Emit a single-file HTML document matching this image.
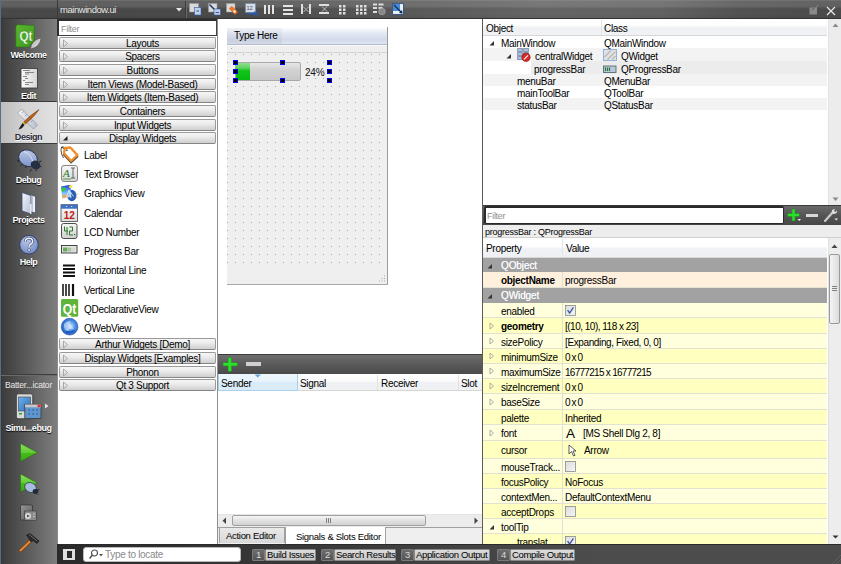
<!DOCTYPE html><html><head><meta charset="utf-8"><style>
*{margin:0;padding:0;box-sizing:border-box}
html,body{width:841px;height:564px;overflow:hidden;background:#fff;font-family:"Liberation Sans",sans-serif;font-size:10px;color:#000}
.ab{position:absolute}
.t{position:absolute;white-space:nowrap;line-height:10px;letter-spacing:-0.3px}
.b{font-weight:bold}
svg{position:absolute;overflow:visible}
</style></head><body>

<div class="ab" style="left:0px;top:0px;width:841px;height:19px;background:linear-gradient(rgba(255,255,255,.2) 0,rgba(255,255,255,.2) 1px,rgba(255,255,255,.13) 1px,rgba(255,255,255,.13) 6px,rgba(255,255,255,0) 9px,rgba(0,0,0,0) 14px,rgba(0,0,0,.05) 18px),linear-gradient(90deg,#484848 0,#4a4a4a 230px,#585858 400px,#646464 540px,#626262 660px,#525252 740px,#4a4a4a 841px);border-bottom:1px solid #333"></div>
<div class="ab" style="left:0px;top:19px;width:57px;height:545px;background:linear-gradient(90deg,#3a3a3a,#5c5c5c 50%,#7e7e7e 100%)"></div>
<div class="ab" style="left:0px;top:0px;width:1px;height:564px;background:#5d6d7d"></div>
<div class="ab" style="left:1px;top:19px;width:1px;height:545px;background:#383838"></div>
<div class="ab" style="left:57px;top:19px;width:1px;height:525px;background:#8c8c8c"></div>
<div class="ab" style="left:57px;top:0px;width:1px;height:19px;background:#3a3a3a"></div>
<div class="ab" style="left:1px;top:101px;width:56px;height:1px;background:#3a3a3a"></div>
<div class="ab" style="left:1px;top:102px;width:56px;height:41px;background:linear-gradient(90deg,#bdbdbd,#d2d2d2 40%,#e2e2e2)"></div>
<div class="ab" style="left:1px;top:143px;width:56px;height:1px;background:#3a3a3a"></div>
<svg style="left:14px;top:24px" width="30" height="26" viewBox="0 0 30 26"><defs><linearGradient id="qg" x1="0" y1="0" x2="1" y2="1"><stop offset="0" stop-color="#5cb52e"/><stop offset="1" stop-color="#3b9a1c"/></linearGradient></defs><path d="M4 0.7 L20.4 1.5 L20.4 16 L14.5 23 L2.5 23 Q1.8 23 1.8 22 L1.8 3 Q1.8 0.7 4 0.7 Z" fill="url(#qg)" stroke="#2a7210" stroke-width="0.6"/><text x="5.5" y="16.6" font-family="Liberation Sans" font-weight="bold" font-size="15" textLength="13" lengthAdjust="spacingAndGlyphs" fill="#fff" stroke="#2a7a10" stroke-width="0.3">Qt</text><path d="M17 24.5 Q17.5 17 26.5 14.5 Q25.5 23 17 24.5 Z" fill="#cfcfcf"/><path d="M18 23.5 Q21 19 25 16" stroke="#a8a8a8" stroke-width="0.5" fill="none"/></svg>
<div class="t b" style="left:0px;width:57px;text-align:center;top:50px;color:#fff;text-shadow:0 1px 1px #000;font-size:9px;letter-spacing:-0.45px">Welcome</div>
<svg style="left:20px;top:67px" width="19" height="23" viewBox="0 0 19 23"><defs><linearGradient id="eg" x1="0" y1="0" x2="1" y2="0"><stop offset="0" stop-color="#fafafa"/><stop offset="1" stop-color="#d6d6d6"/></linearGradient></defs><rect x="1" y="1.5" width="16.5" height="19.5" fill="url(#eg)" stroke="#333" stroke-width="0.8"/><path d="M3 3.5h7M5 5.5h9M5 7h4M3 9.5h4M5 11.5h3M3 13.5h2M5 15.5h8M5 17.5h4" stroke="#7a7a7a" stroke-width="0.9"/></svg>
<div class="t b" style="left:0px;width:57px;text-align:center;top:91px;color:#fff;text-shadow:0 1px 1px #000;font-size:9px;letter-spacing:-0.45px">Edit</div>
<svg style="left:16px;top:108px" width="25" height="23" viewBox="0 0 25 23"><defs><linearGradient id="rg" x1="0" y1="0" x2="1" y2="0"><stop offset="0" stop-color="#f2f4f8"/><stop offset="1" stop-color="#b9c0cc"/></linearGradient></defs><path d="M1.5 5 L5.5 1 L21.5 17 L17.5 21 Z" fill="url(#rg)" stroke="#8d95a2" stroke-width="0.7"/><path d="M6 5l1.5-1.5M9 8l1.5-1.5M12 11l1.5-1.5M15 14l1.5-1.5" stroke="#888" stroke-width="0.7"/><path d="M23 1.5 Q19 8 9.5 16 L7.5 14 Q16 6 23 1.5 Z" fill="#b5601a" stroke="#6a3a10" stroke-width="0.5"/><path d="M7.5 14 L9.5 16 L8.5 17 L6.5 15 Z" fill="#e0b020"/><path d="M6.5 15 L8.5 17 Q6 21 2.5 21.5 Q4.5 18 6.5 15 Z" fill="#1e1e1e"/></svg>
<div class="t b" style="left:0px;width:57px;text-align:center;top:132px;color:#2a2a38;text-shadow:0 1px 0 #fff;font-size:9px;letter-spacing:-0.45px">Design</div>
<svg style="left:16px;top:149px" width="26" height="22" viewBox="0 0 26 22"><defs><linearGradient id="bg1" x1="0" y1="0" x2="0.6" y2="1"><stop offset="0" stop-color="#c6d2ee"/><stop offset="1" stop-color="#7f95c8"/></linearGradient></defs><ellipse cx="12" cy="9.3" rx="9.8" ry="8" fill="url(#bg1)" stroke="#1e2840" stroke-width="0.8" transform="rotate(28 12 9.3)"/><path d="M8 2.5 Q15 5 17.5 14" stroke="#eef2fa" stroke-width="0.7" fill="none"/><ellipse cx="19.5" cy="16" rx="5" ry="4.2" fill="#273042" transform="rotate(30 19.5 16)"/><path d="M15.5 20 l-1.5 2.5 M20 20.5 l0.5 1.5 M23 13 l2.5 -1 M24 17 l1.5 1 M3 11.5 l-2 0.7 M6 15.5 l-1.5 1.5 M10 17.5 l-0.5 1.5" stroke="#1a1a1a" stroke-width="0.9"/></svg>
<div class="t b" style="left:0px;width:57px;text-align:center;top:175px;color:#fff;text-shadow:0 1px 1px #000;font-size:9px;letter-spacing:-0.45px">Debug</div>
<svg style="left:20px;top:191px" width="18" height="25" viewBox="0 0 18 25"><defs><linearGradient id="pg" x1="0" y1="0" x2="1" y2="1"><stop offset="0" stop-color="#f4f6fb"/><stop offset="1" stop-color="#b4bfd6"/></linearGradient></defs><path d="M10 3.5 L15.5 5.5 L15.5 22 L10 20.5 Z" fill="#eef1f6" stroke="#3a4a6a" stroke-width="0.7"/><path d="M12.5 5 L12.5 21" stroke="#9aa6bc" stroke-width="0.6"/><path d="M2 1.5 L11 4.5 L11 23 L2 20 Z" fill="url(#pg)" stroke="#3a4a6a" stroke-width="0.8"/><path d="M10.8 13 L10.8 23" stroke="#fff" stroke-width="1.2"/></svg>
<div class="t b" style="left:0px;width:57px;text-align:center;top:215px;color:#fff;text-shadow:0 1px 1px #000;font-size:9px;letter-spacing:-0.45px">Projects</div>
<svg style="left:18px;top:234px" width="22" height="22" viewBox="0 0 22 22"><defs><radialGradient id="hg" cx="0.4" cy="0.3" r="0.8"><stop offset="0" stop-color="#b7c6ea"/><stop offset="1" stop-color="#6d85c0"/></radialGradient></defs><circle cx="11" cy="10.7" r="9.3" fill="url(#hg)" stroke="#2c3a66" stroke-width="0.9"/><path d="M7.3 7.8 Q7.3 4.3 11 4.3 Q14.6 4.3 14.6 7.4 Q14.6 9.2 12.2 10.5 Q11 11.2 11 13" stroke="#2c3a66" stroke-width="2.6" fill="none"/><path d="M7.3 7.8 Q7.3 4.3 11 4.3 Q14.6 4.3 14.6 7.4 Q14.6 9.2 12.2 10.5 Q11 11.2 11 13" stroke="#f4f6fb" stroke-width="1.5" fill="none"/><circle cx="11" cy="16" r="1.4" fill="#f4f6fb" stroke="#2c3a66" stroke-width="0.6"/></svg>
<div class="t b" style="left:0px;width:57px;text-align:center;top:257px;color:#fff;text-shadow:0 1px 1px #000;font-size:9px;letter-spacing:-0.45px">Help</div>
<div class="ab" style="left:1px;top:374px;width:56px;height:1px;background:#3d3d3d"></div>
<div class="ab" style="left:1px;top:375px;width:56px;height:1px;background:#6a6a6a"></div>
<div class="t " style="left:0px;width:57px;text-align:center;top:380px;color:#e8e8e8;font-size:8.5px;letter-spacing:-0.2px">Batter...icator</div>
<svg style="left:14px;top:392px" width="38" height="28" viewBox="0 0 38 28"><defs><linearGradient id="ph" x1="0" y1="0" x2="1" y2="1"><stop offset="0" stop-color="#6fb0ea"/><stop offset="1" stop-color="#2d6fb8"/></linearGradient></defs><rect x="2.3" y="1.8" width="16.5" height="25" rx="2" fill="#d8d8d8" stroke="#3a3a3a" stroke-width="0.9"/><rect x="4.5" y="5" width="12" height="14" fill="url(#ph)" stroke="#333" stroke-width="0.5"/><rect x="5" y="21" width="3" height="1.5" fill="#2a2"/><rect x="10.8" y="12.3" width="16.2" height="14.2" fill="#5f95cf" stroke="#3a3a3a" stroke-width="0.8"/><rect x="11" y="12.5" width="16" height="2.8" fill="#c8c8c8"/><rect x="23.5" y="12.5" width="3.2" height="2.6" fill="#e03030"/><path d="M14.5 18h1.2M18.5 18h1.2M22.5 18h1.2M14.5 22h1.2M18.5 22h1.2M22.5 22h1.2" stroke="#1c3a66" stroke-width="1.2"/><path d="M31 11.5 L34.5 14 L31 16.5 Z" fill="#e8e8e8"/></svg>
<div class="t b" style="left:0px;width:57px;text-align:center;top:423px;color:#fff;text-shadow:0 1px 1px #000;font-size:9px;letter-spacing:-0.45px">Simu...ebug</div>
<svg style="left:20px;top:442px" width="20" height="22" viewBox="0 0 20 22"><defs><linearGradient id="rn" x1="0" y1="0" x2="0" y2="1"><stop offset="0" stop-color="#8ee060"/><stop offset="0.5" stop-color="#62cc34"/><stop offset="0.52" stop-color="#46bb1a"/><stop offset="1" stop-color="#3aa812"/></linearGradient></defs><path d="M0.5 1.5 L17.5 10.5 L0.5 19.5 Z" fill="url(#rn)" stroke="#2a6a12" stroke-width="0.6"/></svg>
<svg style="left:20px;top:473px" width="22" height="23" viewBox="0 0 22 23"><path d="M0.5 1 L17.5 10 L0.5 19 Z" fill="url(#rn)" stroke="#2a6a12" stroke-width="0.6"/><ellipse cx="10.5" cy="14.5" rx="6" ry="4.8" fill="#a9bbdf" stroke="#2a3550" stroke-width="0.7" transform="rotate(25 10.5 14.5)"/><ellipse cx="15.5" cy="18.5" rx="2.8" ry="2.4" fill="#222a36"/><path d="M18 17 l1.5 -0.5 M17.5 21 l1 1" stroke="#111" stroke-width="0.7"/></svg>
<svg style="left:19px;top:504px" width="20" height="19" viewBox="0 0 20 19"><defs><linearGradient id="bd" x1="0" y1="0" x2="1" y2="1"><stop offset="0" stop-color="#9a9a9a"/><stop offset="1" stop-color="#555"/></linearGradient></defs><rect x="1.5" y="1" width="12" height="15" rx="1" fill="url(#bd)" stroke="#2e2e2e" stroke-width="0.7"/><rect x="5.5" y="7" width="12" height="9.5" fill="#8a8a8a" stroke="#3a3a3a" stroke-width="0.6"/><circle cx="9" cy="12" r="3" fill="#ddd"/><path d="M8 10.5 L11 12 L8 13.5 Z" fill="#555"/><path d="M14 10h2M14 12.5h2" stroke="#ccc" stroke-width="0.8"/></svg>
<svg style="left:18px;top:532px" width="23" height="21" viewBox="0 0 23 21"><path d="M2.5 18.5 L14.5 7" stroke="#7a3a10" stroke-width="3.2" stroke-linecap="round"/><path d="M2.5 18.5 L14.5 7" stroke="#e08a3a" stroke-width="2" stroke-linecap="round"/><path d="M8.5 3 L12 1.5 L21 9 L19 11.5 L15 8.5 L13 10 Z" fill="#2a2a2a" stroke="#111" stroke-width="0.5"/><path d="M11 2.5 L19 9" stroke="#888" stroke-width="0.7"/></svg>
<div class="t " style="left:60px;top:5px;color:#e6e6e6;font-size:9.5px;letter-spacing:-0.45px">mainwindow.ui</div>
<svg style="left:176px;top:8px" width="6" height="4" viewBox="0 0 6 4"><path d="M0 0 L6 0 L3 3.5 Z" fill="#e8e8e8"/></svg>
<div class="ab" style="left:185px;top:1px;width:1px;height:17px;background:#3a3a3a"></div>
<div class="ab" style="left:186px;top:1px;width:1px;height:17px;background:#6a6a6a"></div>
<svg style="left:189px;top:3px" width="14" height="13" viewBox="0 0 14 13"><rect x="0.5" y="0.5" width="9" height="8.5" fill="#d9d9d9" stroke="#999" stroke-width="0.5"/><rect x="5.5" y="4.5" width="6.5" height="7.5" fill="#b9d2f2" stroke="#3a5a9a" stroke-width="0.6"/><rect x="7.5" y="7.5" width="2.5" height="1" fill="#444"/></svg>
<svg style="left:208px;top:3px" width="14" height="13" viewBox="0 0 14 13"><rect x="0.5" y="0.5" width="8.5" height="8.5" fill="#d9d9d9" stroke="#999" stroke-width="0.5"/><path d="M1.5 1.5 L8 8" stroke="#1a3a70" stroke-width="1.5"/><path d="M9 9 L5.5 8.5 L8.5 5.5 Z" fill="#1a3a70"/><rect x="6" y="6" width="6.5" height="6" fill="#b9d2f2" stroke="#3a5a9a" stroke-width="0.6"/><path d="M7.5 9.5h3.5" stroke="#335" stroke-width="0.8"/></svg>
<svg style="left:226px;top:3px" width="13" height="13" viewBox="0 0 13 13"><rect x="0.5" y="0.5" width="8.5" height="8.5" fill="#d9d9d9" stroke="#999" stroke-width="0.5"/><path d="M3.5 5.5 L6 3.5 L11.5 9 L9 11.5 Z" fill="#f07a2a" stroke="#e05a10" stroke-width="0.8"/><circle cx="8.5" cy="8.5" r="1.2" fill="#fff"/></svg>
<svg style="left:245px;top:3px" width="13" height="13" viewBox="0 0 13 13"><rect x="0.5" y="0.5" width="10" height="9" fill="#dcdcdc" stroke="#6a8ac0" stroke-width="0.6"/><text x="1.5" y="7" font-family="Liberation Sans" font-size="5.5" fill="#2a4a9a">12</text><path d="M1.5 10.5h8" stroke="#2a5ab0" stroke-width="1.6"/><path d="M9 8 L12 10.5 L9 13 Z" fill="#2a5ab0"/><path d="M12.5 8v5" stroke="#2a5ab0" stroke-width="1"/></svg>
<svg style="left:264px;top:5px" width="11" height="10" viewBox="0 0 11 10"><path d="M1 0v9M5 0v9M9 0v9" stroke="#e4e4e4" stroke-width="2"/></svg>
<svg style="left:283px;top:5px" width="10" height="10" viewBox="0 0 10 10"><path d="M0 1h10M0 5h10M0 9h10" stroke="#e4e4e4" stroke-width="2"/></svg>
<svg style="left:301px;top:4px" width="10" height="11" viewBox="0 0 10 11"><path d="M1 0v10M9 0v10" stroke="#dedede" stroke-width="2"/><path d="M2.5 3 L5 5.5 L7.5 3 M2.5 8 L5 5.5 L7.5 8" stroke="#bcbcbc" stroke-width="1" fill="none"/></svg>
<svg style="left:319px;top:4px" width="11" height="11" viewBox="0 0 11 11"><path d="M0 1h10M0 9h10" stroke="#dedede" stroke-width="2"/><path d="M3 2.5 L5.5 5 L3 7.5 M8 2.5 L5.5 5 L8 7.5" stroke="#bcbcbc" stroke-width="1" fill="none"/></svg>
<svg style="left:339px;top:5px" width="7" height="10" viewBox="0 0 7 10"><path d="M0 0h2.5v2.5h-2.5zM4 0h2.5v2.5h-2.5zM0 3.5h2.5v2.5h-2.5zM4 3.5h2.5v2.5h-2.5zM0 7h2.5v2.5h-2.5zM4 7h2.5v2.5h-2.5z" fill="#e0e0e0"/></svg>
<svg style="left:356px;top:5px" width="11" height="10" viewBox="0 0 11 10"><path d="M0 0h2.5v2.5h-2.5zM4 0h2.5v2.5h-2.5zM8 0h2.5v2.5h-2.5zM0 3.5h2.5v2.5h-2.5zM4 3.5h2.5v2.5h-2.5zM8 3.5h2.5v2.5h-2.5zM0 7h2.5v2.5h-2.5zM4 7h2.5v2.5h-2.5zM8 7h2.5v2.5h-2.5z" fill="#e0e0e0"/></svg>
<svg style="left:373px;top:3px" width="13" height="12" viewBox="0 0 13 12"><path d="M0 1.5h4M5.5 1.5h5M0 5h4M5.5 5h4M0 9h4" stroke="#dcdcdc" stroke-width="1.8"/><circle cx="9" cy="8.5" r="3.3" fill="#888" stroke="#aaa" stroke-width="0.6"/></svg>
<svg style="left:392px;top:3px" width="12" height="12" viewBox="0 0 12 12"><rect x="0.5" y="0.5" width="11" height="11" fill="#4a8ad0" stroke="#2a4a80" stroke-width="0.6"/><rect x="1" y="8" width="9" height="3" fill="#e8eef6"/><rect x="8" y="1" width="3" height="10" fill="#e8eef6"/><path d="M2 2 L10 10" stroke="#10305a" stroke-width="1.2"/><path d="M10.5 10.5 L7 10 L10 7 Z" fill="#10305a"/></svg>
<svg style="left:809px;top:4px" width="10" height="11" viewBox="0 0 10 11"><rect x="0.5" y="3.5" width="7.5" height="7" fill="#8a8a8a"/><path d="M4 8 L9 1" stroke="#8a8a8a" stroke-width="1"/><path d="M3 6 L5 4" stroke="#555" stroke-width="1"/></svg>
<svg style="left:826px;top:6px" width="10" height="10" viewBox="0 0 10 10"><path d="M1 1 L9 9 M9 1 L1 9" stroke="#e8e8e8" stroke-width="1.2"/></svg>
<div class="ab" style="left:58px;top:19px;width:159px;height:525px;background:#fff"></div>
<div class="ab" style="left:217px;top:19px;width:1px;height:525px;background:#8e8e8e"></div>
<div class="ab" style="left:57px;top:19px;width:160px;height:17px;background:#fff;border-top:2px solid #2e2e2e;border-left:2px solid #2e2e2e;border-bottom:1px solid #3a3a3a;border-right:1px solid #444"></div>
<div class="t " style="left:61px;top:24px;color:#909090;font-size:9px">Filter</div>
<div class="ab" style="left:59px;top:37px;width:157px;height:12px;border:1px solid #9a9a9a;border-bottom-color:#858585;border-radius:2px;background:linear-gradient(#f6f6f6,#ececec 40%,#d8d8d8 80%,#d0d0d0)"></div>
<svg style="left:62px;top:39px" width="7" height="9" viewBox="0 0 7 9"><path d="M1.5 1 L5.5 4.5 L1.5 8 Z" fill="none" stroke="#a0a0a0" stroke-width="0.9"/></svg>
<div class="t " style="left:69px;width:147px;text-align:center;top:39px;color:#000">Layouts</div>
<div class="ab" style="left:59px;top:50px;width:157px;height:12px;border:1px solid #9a9a9a;border-bottom-color:#858585;border-radius:2px;background:linear-gradient(#f6f6f6,#ececec 40%,#d8d8d8 80%,#d0d0d0)"></div>
<svg style="left:62px;top:52px" width="7" height="9" viewBox="0 0 7 9"><path d="M1.5 1 L5.5 4.5 L1.5 8 Z" fill="none" stroke="#a0a0a0" stroke-width="0.9"/></svg>
<div class="t " style="left:69px;width:147px;text-align:center;top:52px;color:#000">Spacers</div>
<div class="ab" style="left:59px;top:64px;width:157px;height:12px;border:1px solid #9a9a9a;border-bottom-color:#858585;border-radius:2px;background:linear-gradient(#f6f6f6,#ececec 40%,#d8d8d8 80%,#d0d0d0)"></div>
<svg style="left:62px;top:66px" width="7" height="9" viewBox="0 0 7 9"><path d="M1.5 1 L5.5 4.5 L1.5 8 Z" fill="none" stroke="#a0a0a0" stroke-width="0.9"/></svg>
<div class="t " style="left:69px;width:147px;text-align:center;top:66px;color:#000">Buttons</div>
<div class="ab" style="left:59px;top:78px;width:157px;height:12px;border:1px solid #9a9a9a;border-bottom-color:#858585;border-radius:2px;background:linear-gradient(#f6f6f6,#ececec 40%,#d8d8d8 80%,#d0d0d0)"></div>
<svg style="left:62px;top:80px" width="7" height="9" viewBox="0 0 7 9"><path d="M1.5 1 L5.5 4.5 L1.5 8 Z" fill="none" stroke="#a0a0a0" stroke-width="0.9"/></svg>
<div class="t " style="left:69px;width:147px;text-align:center;top:80px;color:#000">Item Views (Model-Based)</div>
<div class="ab" style="left:59px;top:91px;width:157px;height:12px;border:1px solid #9a9a9a;border-bottom-color:#858585;border-radius:2px;background:linear-gradient(#f6f6f6,#ececec 40%,#d8d8d8 80%,#d0d0d0)"></div>
<svg style="left:62px;top:93px" width="7" height="9" viewBox="0 0 7 9"><path d="M1.5 1 L5.5 4.5 L1.5 8 Z" fill="none" stroke="#a0a0a0" stroke-width="0.9"/></svg>
<div class="t " style="left:69px;width:147px;text-align:center;top:93px;color:#000">Item Widgets (Item-Based)</div>
<div class="ab" style="left:59px;top:105px;width:157px;height:12px;border:1px solid #9a9a9a;border-bottom-color:#858585;border-radius:2px;background:linear-gradient(#f6f6f6,#ececec 40%,#d8d8d8 80%,#d0d0d0)"></div>
<svg style="left:62px;top:107px" width="7" height="9" viewBox="0 0 7 9"><path d="M1.5 1 L5.5 4.5 L1.5 8 Z" fill="none" stroke="#a0a0a0" stroke-width="0.9"/></svg>
<div class="t " style="left:69px;width:147px;text-align:center;top:107px;color:#000">Containers</div>
<div class="ab" style="left:59px;top:119px;width:157px;height:12px;border:1px solid #9a9a9a;border-bottom-color:#858585;border-radius:2px;background:linear-gradient(#f6f6f6,#ececec 40%,#d8d8d8 80%,#d0d0d0)"></div>
<svg style="left:62px;top:121px" width="7" height="9" viewBox="0 0 7 9"><path d="M1.5 1 L5.5 4.5 L1.5 8 Z" fill="none" stroke="#a0a0a0" stroke-width="0.9"/></svg>
<div class="t " style="left:69px;width:147px;text-align:center;top:121px;color:#000">Input Widgets</div>
<div class="ab" style="left:59px;top:132px;width:157px;height:12px;border:1px solid #9a9a9a;border-bottom-color:#858585;border-radius:2px;background:linear-gradient(#f6f6f6,#ececec 40%,#d8d8d8 80%,#d0d0d0)"></div>
<svg style="left:62px;top:135px" width="7" height="7" viewBox="0 0 7 7"><path d="M1 5.5 L5.5 5.5 L5.5 1 Z" fill="#222"/></svg>
<div class="t " style="left:69px;width:147px;text-align:center;top:134px;color:#000">Display Widgets</div>
<div class="ab" style="left:59px;top:338px;width:157px;height:12px;border:1px solid #9a9a9a;border-bottom-color:#858585;border-radius:2px;background:linear-gradient(#f6f6f6,#ececec 40%,#d8d8d8 80%,#d0d0d0)"></div>
<svg style="left:62px;top:340px" width="7" height="9" viewBox="0 0 7 9"><path d="M1.5 1 L5.5 4.5 L1.5 8 Z" fill="none" stroke="#a0a0a0" stroke-width="0.9"/></svg>
<div class="t " style="left:69px;width:147px;text-align:center;top:340px;color:#000">Arthur Widgets [Demo]</div>
<div class="ab" style="left:59px;top:352px;width:157px;height:12px;border:1px solid #9a9a9a;border-bottom-color:#858585;border-radius:2px;background:linear-gradient(#f6f6f6,#ececec 40%,#d8d8d8 80%,#d0d0d0)"></div>
<svg style="left:62px;top:354px" width="7" height="9" viewBox="0 0 7 9"><path d="M1.5 1 L5.5 4.5 L1.5 8 Z" fill="none" stroke="#a0a0a0" stroke-width="0.9"/></svg>
<div class="t " style="left:69px;width:147px;text-align:center;top:354px;color:#000">Display Widgets [Examples]</div>
<div class="ab" style="left:59px;top:366px;width:157px;height:12px;border:1px solid #9a9a9a;border-bottom-color:#858585;border-radius:2px;background:linear-gradient(#f6f6f6,#ececec 40%,#d8d8d8 80%,#d0d0d0)"></div>
<svg style="left:62px;top:368px" width="7" height="9" viewBox="0 0 7 9"><path d="M1.5 1 L5.5 4.5 L1.5 8 Z" fill="none" stroke="#a0a0a0" stroke-width="0.9"/></svg>
<div class="t " style="left:69px;width:147px;text-align:center;top:368px;color:#000">Phonon</div>
<div class="ab" style="left:59px;top:379px;width:157px;height:12px;border:1px solid #9a9a9a;border-bottom-color:#858585;border-radius:2px;background:linear-gradient(#f6f6f6,#ececec 40%,#d8d8d8 80%,#d0d0d0)"></div>
<svg style="left:62px;top:381px" width="7" height="9" viewBox="0 0 7 9"><path d="M1.5 1 L5.5 4.5 L1.5 8 Z" fill="none" stroke="#a0a0a0" stroke-width="0.9"/></svg>
<div class="t " style="left:69px;width:147px;text-align:center;top:381px;color:#000">Qt 3 Support</div>
<div class="t " style="left:84px;top:151px;color:#000">Label</div>
<div class="t " style="left:84px;top:170px;color:#000">Text Browser</div>
<div class="t " style="left:84px;top:189px;color:#000">Graphics View</div>
<div class="t " style="left:84px;top:209px;color:#000">Calendar</div>
<div class="t " style="left:84px;top:228px;color:#000">LCD Number</div>
<div class="t " style="left:84px;top:247px;color:#000">Progress Bar</div>
<div class="t " style="left:84px;top:266px;color:#000">Horizontal Line</div>
<div class="t " style="left:84px;top:286px;color:#000">Vertical Line</div>
<div class="t " style="left:84px;top:305px;color:#000">QDeclarativeView</div>
<div class="t " style="left:84px;top:324px;color:#000">QWebView</div>
<svg style="left:60px;top:146px" width="20" height="17" viewBox="0 0 20 17"><g transform="translate(10 7.5) rotate(47)"><path d="M-7.5 0 L-4.2 -4.3 L6.3 -4.3 L6.3 4.3 L-4.2 4.3 Z" fill="#fff" stroke="#f0902a" stroke-width="2.4" stroke-linejoin="round"/><path d="M7.8 -4 L7.8 5.8 L-4 5.8" fill="none" stroke="#2a1a0a" stroke-width="1" opacity="0.8"/><circle cx="-4.6" cy="0" r="0.9" fill="#555"/></g><path d="M4.2 2.5 Q1.5 0.3 1 3.5 Q0.8 8 3.5 12" stroke="#222" stroke-width="0.8" fill="none"/><path d="M1.2 1.5 L3.5 0.8" stroke="#111" stroke-width="1"/></svg>
<svg style="left:61px;top:165px" width="17" height="17" viewBox="0 0 17 17"><defs><linearGradient id="tbg" x1="0" y1="0" x2="0" y2="1"><stop offset="0" stop-color="#f8f8f8"/><stop offset="1" stop-color="#d4d4d4"/></linearGradient></defs><rect x="0.5" y="0.5" width="16" height="16" rx="2.5" fill="url(#tbg)" stroke="#7a7a7a" stroke-width="0.9"/><text x="2" y="12" font-family="Liberation Serif" font-style="italic" font-size="11" fill="#1f7a1f">A</text><path d="M10 3h4M12 3v10M10 13h4" stroke="#555" stroke-width="0.9"/><path d="M2 14h8" stroke="#2a8a2a" stroke-width="0.8"/></svg>
<svg style="left:60px;top:184px" width="18" height="18" viewBox="0 0 18 18"><defs><linearGradient id="gvs" x1="0" y1="0" x2="0" y2="1"><stop offset="0" stop-color="#1a3ae0"/><stop offset="0.6" stop-color="#7ac0ff"/><stop offset="1" stop-color="#b0d8ff"/></linearGradient></defs><ellipse cx="11.8" cy="11.5" rx="4.6" ry="5.7" fill="#2a5cb0"/><path d="M1 2.6 L10.5 0.8 L11.3 13 L2.2 14.2 Z" fill="url(#gvs)"/><path d="M1.5 4 Q4 2.5 6 4 L5 6.5 Q3.5 9 2 7 Z" fill="#3ac83a"/><path d="M2.2 11.2 L8 10.4 L8.2 13.3 L2.2 14.2 Z" fill="#f0a850" opacity="0.9"/><circle cx="10.6" cy="2.6" r="1.7" fill="#f8e040"/><path d="M6.5 14 L9 6 L11 14 M10.5 8 L13.5 12.5" stroke="#e8eef8" stroke-width="1" fill="none" opacity="0.85"/><path d="M15.5 10h2M15.5 13.5h2" stroke="#aaa" stroke-width="0.7"/></svg>
<svg style="left:60px;top:204px" width="19" height="18" viewBox="0 0 19 18"><defs><linearGradient id="clg" x1="0" y1="0" x2="0" y2="1"><stop offset="0" stop-color="#fdfdfd"/><stop offset="1" stop-color="#dadada"/></linearGradient></defs><rect x="1" y="0.7" width="16.5" height="16.8" fill="url(#clg)" stroke="#444" stroke-width="0.8"/><rect x="1" y="0.7" width="16.5" height="4" fill="#3f72c6"/><path d="M6 2.5h1.2M11 2.5h1.2" stroke="#ddd" stroke-width="1"/><text x="9.3" y="15" text-anchor="middle" font-family="Liberation Sans" font-weight="bold" font-size="10" fill="#c01818">12</text></svg>
<svg style="left:61px;top:223px" width="17" height="17" viewBox="0 0 17 17"><defs><linearGradient id="lcg" x1="0" y1="0" x2="0" y2="1"><stop offset="0" stop-color="#f6f6f6"/><stop offset="1" stop-color="#cfcfcf"/></linearGradient></defs><rect x="0.5" y="0.5" width="15.5" height="15" rx="2" fill="url(#lcg)" stroke="#3a3a3a" stroke-width="0.9"/><path d="M3.5 3.5 L3.5 8 L7 8 M6 4 L6 12" stroke="#2a7a2a" stroke-width="1" fill="none"/><path d="M8.5 4 L11.5 4 L11.5 8 L8.5 8 L8.5 12 L12 12" stroke="#2a7a2a" stroke-width="1" fill="none"/><rect x="13" y="11" width="1.2" height="1.2" fill="#2a7a2a"/></svg>
<svg style="left:61px;top:245px" width="17" height="9" viewBox="0 0 17 9"><rect x="0.5" y="0.5" width="15.5" height="7.5" fill="#e4e4e4" stroke="#333" stroke-width="0.9"/><path d="M3 2.5v4M5 2.5v4" stroke="#2a8a1a" stroke-width="1.3"/><path d="M7 2.5v4M9 2.5v4" stroke="#8ab47a" stroke-width="1.3"/><path d="M11 2.5v4M13 2.5v4" stroke="#c8d4c4" stroke-width="1.3"/></svg>
<svg style="left:62px;top:264px" width="15" height="14" viewBox="0 0 15 14"><path d="M1 1.5h12M1 5h12M1 8.5h12M1 12h12" stroke="#111" stroke-width="1.8"/></svg>
<svg style="left:62px;top:283px" width="15" height="14" viewBox="0 0 15 14"><path d="M1 1v12M4 1v12M7 1v12M11 1v12" stroke="#111" stroke-width="1.5"/><path d="M11 1v12" stroke="#111" stroke-width="2.2"/></svg>
<svg style="left:61px;top:299px" width="18" height="18" viewBox="0 0 18 18"><rect x="0" y="0" width="17.2" height="17.8" rx="1.5" fill="#5fb43a"/><text x="1.8" y="14.6" font-family="Liberation Sans" font-weight="bold" font-size="14.5" textLength="13.6" lengthAdjust="spacingAndGlyphs" fill="#fff">Qt</text></svg>
<svg style="left:61px;top:318px" width="18" height="18" viewBox="0 0 18 18"><defs><radialGradient id="wg" cx="0.55" cy="0.45" r="0.65"><stop offset="0" stop-color="#cfe6ff"/><stop offset="0.45" stop-color="#4a90e8"/><stop offset="1" stop-color="#1a4ab0"/></radialGradient></defs><circle cx="8.6" cy="8.7" r="8.4" fill="url(#wg)" stroke="#1a4a9a" stroke-width="0.5"/><path d="M3 6 Q6 2.5 10 3.5 Q8 5 9.5 7.5 Q12 9 13 11 Q9 10 7 13 Q4 13 3 9 Z" fill="#e8f2ff" opacity="0.55"/><path d="M5 13.5 Q9 15.5 13.5 12.5" stroke="#1a50b8" stroke-width="1.5" fill="none"/></svg>
<div class="ab" style="left:227px;top:28px;width:160px;height:256px;background:#efefef"></div>
<svg style="left:227px;top:53px" width="160" height="212"><defs><pattern id="gd" x="0" y="1" width="8" height="8" patternUnits="userSpaceOnUse"><rect x="0" y="0" width="1" height="1" fill="#a6a6a6"/></pattern></defs><rect x="0" y="0" width="160" height="212" fill="url(#gd)"/></svg>
<div class="ab" style="left:227px;top:28px;width:160px;height:17px;background:linear-gradient(#fbfcfe,#e2e7f2 35%,#d3daeb 70%,#dde3f0);border-bottom:1px solid #b4bccf"></div>
<div class="ab" style="left:227px;top:28px;width:55px;height:16px;background:linear-gradient(#f0f2f7,#d9dee9 40%,#c9d0df 75%,#d3d8e4)"></div>
<div class="t " style="left:234px;top:31px;color:#000">Type Here</div>
<div class="ab" style="left:227px;top:45px;width:160px;height:8px;background:#efefef;border-top:1px solid #fafafa;border-bottom:1px solid #d4d4d4"></div>
<div class="ab" style="left:231px;top:48px;width:1px;height:1px;background:#aaa"></div>
<div class="ab" style="left:387px;top:27px;width:1px;height:258px;background:#9c9c9c"></div>
<div class="ab" style="left:227px;top:284px;width:161px;height:1px;background:#a8a8a8"></div>
<div class="ab" style="left:227px;top:265px;width:160px;height:19px;background:#efefef"></div>
<svg style="left:375px;top:274px" width="12" height="10" viewBox="0 0 12 10"><path d="M9.5 1.5v1M7 4v1M9.5 4v1M4.5 6.5v1M7 6.5v1M9.5 6.5v1" stroke="#aaa" stroke-width="1"/></svg>
<div class="ab" style="left:235px;top:62px;width:66px;height:19px;border:1px solid #a9a9a9;border-radius:2px;background:linear-gradient(#e6e6e6,#d2d2d2 40%,#c8c8c8)"></div>
<div class="ab" style="left:236px;top:63px;width:14px;height:17px;background:linear-gradient(#8fe08f,#60d060 30%,#12c41a 45%,#08b80f)"></div>
<div class="t " style="left:305px;top:68px;color:#111;letter-spacing:-0.2px">24%</div>
<div class="ab" style="left:233px;top:60px;width:5px;height:5px;background:#000;border:1px solid #0000f0"></div>
<div class="ab" style="left:233px;top:69px;width:5px;height:5px;background:#000;border:1px solid #0000f0"></div>
<div class="ab" style="left:233px;top:78px;width:5px;height:5px;background:#000;border:1px solid #0000f0"></div>
<div class="ab" style="left:280px;top:60px;width:5px;height:5px;background:#000;border:1px solid #0000f0"></div>
<div class="ab" style="left:280px;top:78px;width:5px;height:5px;background:#000;border:1px solid #0000f0"></div>
<div class="ab" style="left:327px;top:60px;width:5px;height:5px;background:#000;border:1px solid #0000f0"></div>
<div class="ab" style="left:327px;top:69px;width:5px;height:5px;background:#000;border:1px solid #0000f0"></div>
<div class="ab" style="left:327px;top:78px;width:5px;height:5px;background:#000;border:1px solid #0000f0"></div>
<div class="ab" style="left:482px;top:19px;width:1px;height:525px;background:#5a5a5a"></div>
<div class="ab" style="left:483px;top:19px;width:358px;height:187px;background:#fff"></div>
<div class="ab" style="left:483px;top:19px;width:344px;height:17px;background:linear-gradient(#ffffff,#fdfdfd 40%,#eef0f3 55%,#f1f2f4);border-bottom:1px solid #d5d7da"></div>
<div class="ab" style="left:601px;top:20px;width:1px;height:15px;background:#e3e3e3"></div>
<div class="t " style="left:486px;top:24px;color:#000">Object</div>
<div class="t " style="left:604px;top:24px;color:#000">Class</div>
<div class="ab" style="left:483px;top:48px;width:344px;height:13px;background:#f3f3f3"></div>
<div class="ab" style="left:483px;top:74px;width:344px;height:12px;background:#f3f3f3"></div>
<div class="ab" style="left:483px;top:98px;width:344px;height:12px;background:#f3f3f3"></div>
<div class="ab" style="left:531px;top:61px;width:296px;height:13px;background:#ececec"></div>
<svg style="left:489px;top:40px" width="6" height="6" viewBox="0 0 6 6"><path d="M0.5 5.5 L5 5.5 L5 1 Z" fill="#333"/></svg>
<svg style="left:506px;top:53px" width="6" height="6" viewBox="0 0 6 6"><path d="M0.5 5.5 L5 5.5 L5 1 Z" fill="#333"/></svg>
<div class="t " style="left:501px;top:39px;">MainWindow</div>
<div class="t " style="left:604px;top:39px;">QMainWindow</div>
<svg style="left:517px;top:48px" width="14" height="14" viewBox="0 0 14 14"><path d="M0.5 0.5h5v3h-5zM6.5 0.5h5v3h-5zM0.5 4.5h5v3h-5zM6.5 4.5h5v3h-5zM0.5 8.5h5v3h-5z" fill="#a9c0e0" stroke="#5a7090" stroke-width="0.6"/><circle cx="9" cy="9.3" r="4.2" fill="#d42a2a" stroke="#8a1010" stroke-width="0.6"/><path d="M7 11.3 L11 7.3" stroke="#fff" stroke-width="1.1"/></svg>
<div class="t " style="left:535px;top:52px;">centralWidget</div>
<svg style="left:603px;top:49px" width="14" height="12" viewBox="0 0 14 12"><rect x="0.5" y="0.5" width="13" height="11" fill="#e2e2e2" stroke="#86aee0" stroke-width="0.9"/><path d="M1.5 8 L8 1.5 M4.5 10.5 L12.5 2.5 M9 10.5 L12.5 7" stroke="#b8b8b8" stroke-width="1.4"/></svg>
<div class="t " style="left:621px;top:52px;">QWidget</div>
<div class="t " style="left:534px;top:65px;">progressBar</div>
<svg style="left:603px;top:65px" width="14" height="8" viewBox="0 0 14 8"><rect x="0.5" y="1" width="12.5" height="6.5" fill="#b8c8d4" stroke="#4a5a6a" stroke-width="0.8"/><path d="M2.5 2.5v3.5M4.5 2.5v3.5M6.5 2.5v3.5" stroke="#2a7a3a" stroke-width="1.2"/></svg>
<div class="t " style="left:621px;top:65px;">QProgressBar</div>
<div class="t " style="left:517px;top:77px;">menuBar</div>
<div class="t " style="left:604px;top:77px;">QMenuBar</div>
<div class="t " style="left:517px;top:89px;">mainToolBar</div>
<div class="t " style="left:604px;top:89px;">QToolBar</div>
<div class="t " style="left:517px;top:101px;">statusBar</div>
<div class="t " style="left:604px;top:101px;">QStatusBar</div>
<div class="ab" style="left:828px;top:19px;width:13px;height:187px;background:#ececec;border-left:1px solid #e2e2e2"></div>
<svg style="left:832px;top:23px" width="8" height="5" viewBox="0 0 8 5"><path d="M0.5 4 L3.5 0.5 L6.5 4 Z" fill="#8a8a8a"/></svg>
<svg style="left:832px;top:197px" width="8" height="5" viewBox="0 0 8 5"><path d="M0.5 0.5 L3.5 4 L6.5 0.5 Z" fill="#8a8a8a"/></svg>
<div class="ab" style="left:483px;top:205px;width:358px;height:20px;background:linear-gradient(#6a6a6a,#555 50%,#474747);border-top:1px solid #3a3a3a"></div>
<div class="ab" style="left:484px;top:206px;width:300px;height:18px;background:#fff;border:2px solid #2a2a2a;border-right-width:1px;border-bottom-width:1px;border-radius:2px"></div>
<div class="t " style="left:487px;top:211px;color:#909090;font-size:9px">Filter</div>
<svg style="left:787px;top:208px" width="15" height="15" viewBox="0 0 15 15"><path d="M6.5 1v12M0.5 7h12" stroke="#1aa81a" stroke-width="3.4"/><path d="M6.5 1.5v11M1 7h11" stroke="#2ee02e" stroke-width="2.2"/><path d="M10.5 11 L14 11 L12.25 13 Z" fill="#eee"/></svg>
<div class="ab" style="left:806px;top:214px;width:12px;height:3px;background:#d8d8d8"></div>
<svg style="left:823px;top:208px" width="16" height="15" viewBox="0 0 16 15"><path d="M2 13 L10 4" stroke="#ccc" stroke-width="2.2" stroke-linecap="round"/><path d="M9 5 Q8 1 12 1 L11 3 L13 4 L14 2 Q15 6 10 6" fill="#ddd"/><path d="M11.5 10.5 L15 10.5 L13.25 12.5 Z" fill="#eee"/></svg>
<div class="ab" style="left:483px;top:225px;width:358px;height:13px;background:#ededed;border-bottom:1px solid #cfcfcf"></div>
<div class="t " style="left:485px;top:227px;font-size:9px;letter-spacing:-0.25px">progressBar : QProgressBar</div>
<div class="ab" style="left:483px;top:238px;width:344px;height:20px;background:linear-gradient(#fff,#fff 45%,#f0f2f5 55%,#eef0f3);border-bottom:1px solid #d8d8d8"></div>
<div class="ab" style="left:562px;top:239px;width:1px;height:18px;background:#e6e6e6"></div>
<div class="t " style="left:486px;top:244px;">Property</div>
<div class="t " style="left:566px;top:244px;">Value</div>
<div class="ab" style="left:483px;top:258px;width:344px;height:14px;background:#a2a2a2"></div>
<svg style="left:487px;top:263px" width="6" height="6" viewBox="0 0 6 6"><path d="M0.5 5.5 L5 5.5 L5 1 Z" fill="#333"/></svg>
<div class="t " style="left:501px;top:261px;color:#f6f8fc;letter-spacing:-0.1px;text-shadow:0 0 0.4px #fff">QObject</div>
<div class="ab" style="left:483px;top:272px;width:344px;height:16px;background:#fff0de;border-bottom:1px solid #e2e2d2"></div>
<div class="ab" style="left:562px;top:272px;width:1px;height:16px;background:#e0e0d0"></div>
<div class="t b" style="left:501px;top:276px;">objectName</div>
<div class="t " style="left:565px;top:276px;letter-spacing:-0.3px">progressBar</div>
<div class="ab" style="left:483px;top:288px;width:344px;height:15px;background:#a2a2a2"></div>
<svg style="left:487px;top:293px" width="6" height="6" viewBox="0 0 6 6"><path d="M0.5 5.5 L5 5.5 L5 1 Z" fill="#333"/></svg>
<div class="t " style="left:501px;top:291px;color:#f6f8fc;letter-spacing:-0.1px;text-shadow:0 0 0.4px #fff">QWidget</div>
<div class="ab" style="left:483px;top:303px;width:344px;height:15px;background:#ffffde;border-bottom:1px solid #e2e2d2"></div>
<div class="ab" style="left:562px;top:303px;width:1px;height:15px;background:#e0e0d0"></div>
<div class="t " style="left:501px;top:307px;">enabled</div>
<svg style="left:565px;top:305px" width="11" height="11" viewBox="0 0 11 11"><defs><linearGradient id="ck303" x1="0" y1="0" x2="1" y2="1"><stop offset="0" stop-color="#dcdcdc"/><stop offset="1" stop-color="#f6f6f6"/></linearGradient></defs><rect x="0.5" y="0.5" width="10" height="10" fill="url(#ck303)" stroke="#8a8a8a" stroke-width="0.8"/><path d="M2.6 5.2 L4.6 8 L8.4 2.4" stroke="#3a56a8" stroke-width="1.3" fill="none"/></svg>
<div class="ab" style="left:483px;top:318px;width:344px;height:16px;background:#ffffbf;border-bottom:1px solid #e2e2d2"></div>
<div class="ab" style="left:562px;top:318px;width:1px;height:16px;background:#e0e0d0"></div>
<svg style="left:489px;top:322px" width="6" height="9" viewBox="0 0 6 9"><path d="M1 1 L4.5 4 L1 7 Z" fill="none" stroke="#9a9a9a" stroke-width="0.8"/></svg>
<div class="t b" style="left:501px;top:322px;">geometry</div>
<div class="t " style="left:565px;top:322px;letter-spacing:-0.5px">[(10, 10), 118 x 23]</div>
<div class="ab" style="left:483px;top:334px;width:344px;height:15px;background:#ffffde;border-bottom:1px solid #e2e2d2"></div>
<div class="ab" style="left:562px;top:334px;width:1px;height:15px;background:#e0e0d0"></div>
<svg style="left:489px;top:337px" width="6" height="9" viewBox="0 0 6 9"><path d="M1 1 L4.5 4 L1 7 Z" fill="none" stroke="#9a9a9a" stroke-width="0.8"/></svg>
<div class="t " style="left:501px;top:338px;">sizePolicy</div>
<div class="t " style="left:565px;top:338px;letter-spacing:-0.38px">[Expanding, Fixed, 0, 0]</div>
<div class="ab" style="left:483px;top:349px;width:344px;height:15px;background:#ffffbf;border-bottom:1px solid #e2e2d2"></div>
<div class="ab" style="left:562px;top:349px;width:1px;height:15px;background:#e0e0d0"></div>
<svg style="left:489px;top:352px" width="6" height="9" viewBox="0 0 6 9"><path d="M1 1 L4.5 4 L1 7 Z" fill="none" stroke="#9a9a9a" stroke-width="0.8"/></svg>
<div class="t " style="left:501px;top:353px;">minimumSize</div>
<div class="t " style="left:565px;top:353px;letter-spacing:-0.9px">0 x 0</div>
<div class="ab" style="left:483px;top:364px;width:344px;height:15px;background:#ffffde;border-bottom:1px solid #e2e2d2"></div>
<div class="ab" style="left:562px;top:364px;width:1px;height:15px;background:#e0e0d0"></div>
<svg style="left:489px;top:367px" width="6" height="9" viewBox="0 0 6 9"><path d="M1 1 L4.5 4 L1 7 Z" fill="none" stroke="#9a9a9a" stroke-width="0.8"/></svg>
<div class="t " style="left:501px;top:368px;">maximumSize</div>
<div class="t " style="left:565px;top:368px;letter-spacing:-0.72px">16777215 x 16777215</div>
<div class="ab" style="left:483px;top:379px;width:344px;height:15px;background:#ffffbf;border-bottom:1px solid #e2e2d2"></div>
<div class="ab" style="left:562px;top:379px;width:1px;height:15px;background:#e0e0d0"></div>
<svg style="left:489px;top:382px" width="6" height="9" viewBox="0 0 6 9"><path d="M1 1 L4.5 4 L1 7 Z" fill="none" stroke="#9a9a9a" stroke-width="0.8"/></svg>
<div class="t " style="left:501px;top:383px;">sizeIncrement</div>
<div class="t " style="left:565px;top:383px;letter-spacing:-0.9px">0 x 0</div>
<div class="ab" style="left:483px;top:394px;width:344px;height:16px;background:#ffffde;border-bottom:1px solid #e2e2d2"></div>
<div class="ab" style="left:562px;top:394px;width:1px;height:16px;background:#e0e0d0"></div>
<svg style="left:489px;top:398px" width="6" height="9" viewBox="0 0 6 9"><path d="M1 1 L4.5 4 L1 7 Z" fill="none" stroke="#9a9a9a" stroke-width="0.8"/></svg>
<div class="t " style="left:501px;top:398px;">baseSize</div>
<div class="t " style="left:565px;top:398px;letter-spacing:-0.9px">0 x 0</div>
<div class="ab" style="left:483px;top:410px;width:344px;height:15px;background:#ffffbf;border-bottom:1px solid #e2e2d2"></div>
<div class="ab" style="left:562px;top:410px;width:1px;height:15px;background:#e0e0d0"></div>
<div class="t " style="left:501px;top:414px;">palette</div>
<div class="t " style="left:565px;top:414px;letter-spacing:-0.3px">Inherited</div>
<div class="ab" style="left:483px;top:425px;width:344px;height:16px;background:#ffffde;border-bottom:1px solid #e2e2d2"></div>
<div class="ab" style="left:562px;top:425px;width:1px;height:16px;background:#e0e0d0"></div>
<svg style="left:489px;top:429px" width="6" height="9" viewBox="0 0 6 9"><path d="M1 1 L4.5 4 L1 7 Z" fill="none" stroke="#9a9a9a" stroke-width="0.8"/></svg>
<div class="t " style="left:501px;top:429px;">font</div>
<div class="t " style="left:566px;top:429px;font-size:13.5px;letter-spacing:0">A</div>
<div class="t " style="left:583px;top:429px;">[MS Shell Dlg 2, 8]</div>
<div class="ab" style="left:483px;top:441px;width:344px;height:18px;background:#ffffbf;border-bottom:1px solid #e2e2d2"></div>
<div class="ab" style="left:562px;top:441px;width:1px;height:18px;background:#e0e0d0"></div>
<div class="t " style="left:501px;top:446px;">cursor</div>
<svg style="left:568px;top:444px" width="9" height="13" viewBox="0 0 9 13"><path d="M1 1 L1 10 L3.5 7.5 L5.5 12 L7 11.3 L5 7 L8 7 Z" fill="#fff" stroke="#333" stroke-width="0.8"/></svg>
<div class="t " style="left:584px;top:446px;">Arrow</div>
<div class="ab" style="left:483px;top:459px;width:344px;height:15px;background:#ffffde;border-bottom:1px solid #e2e2d2"></div>
<div class="ab" style="left:562px;top:459px;width:1px;height:15px;background:#e0e0d0"></div>
<div class="t " style="left:501px;top:463px;">mouseTrack...</div>
<svg style="left:565px;top:461px" width="11" height="11" viewBox="0 0 11 11"><defs><linearGradient id="ck459" x1="0" y1="0" x2="1" y2="1"><stop offset="0" stop-color="#dcdcdc"/><stop offset="1" stop-color="#f6f6f6"/></linearGradient></defs><rect x="0.5" y="0.5" width="10" height="10" fill="url(#ck459)" stroke="#8a8a8a" stroke-width="0.8"/></svg>
<div class="ab" style="left:483px;top:474px;width:344px;height:15px;background:#ffffbf;border-bottom:1px solid #e2e2d2"></div>
<div class="ab" style="left:562px;top:474px;width:1px;height:15px;background:#e0e0d0"></div>
<div class="t " style="left:501px;top:478px;">focusPolicy</div>
<div class="t " style="left:565px;top:478px;letter-spacing:-0.3px">NoFocus</div>
<div class="ab" style="left:483px;top:489px;width:344px;height:15px;background:#ffffde;border-bottom:1px solid #e2e2d2"></div>
<div class="ab" style="left:562px;top:489px;width:1px;height:15px;background:#e0e0d0"></div>
<div class="t " style="left:501px;top:493px;">contextMen...</div>
<div class="t " style="left:565px;top:493px;letter-spacing:-0.3px">DefaultContextMenu</div>
<div class="ab" style="left:483px;top:504px;width:344px;height:15px;background:#ffffbf;border-bottom:1px solid #e2e2d2"></div>
<div class="ab" style="left:562px;top:504px;width:1px;height:15px;background:#e0e0d0"></div>
<div class="t " style="left:501px;top:508px;">acceptDrops</div>
<svg style="left:565px;top:506px" width="11" height="11" viewBox="0 0 11 11"><defs><linearGradient id="ck504" x1="0" y1="0" x2="1" y2="1"><stop offset="0" stop-color="#dcdcdc"/><stop offset="1" stop-color="#f6f6f6"/></linearGradient></defs><rect x="0.5" y="0.5" width="10" height="10" fill="url(#ck504)" stroke="#8a8a8a" stroke-width="0.8"/></svg>
<div class="ab" style="left:483px;top:519px;width:344px;height:15px;background:#ffffde;border-bottom:1px solid #e2e2d2"></div>
<div class="ab" style="left:562px;top:519px;width:1px;height:15px;background:#e0e0d0"></div>
<svg style="left:489px;top:524px" width="6" height="6" viewBox="0 0 6 6"><path d="M0.5 5.5 L5 5.5 L5 1 Z" fill="#333"/></svg>
<div class="t " style="left:501px;top:523px;">toolTip</div>
<div class="ab" style="left:483px;top:534px;width:344px;height:15px;background:#ffffbf;border-bottom:1px solid #e2e2d2"></div>
<div class="ab" style="left:562px;top:534px;width:1px;height:15px;background:#e0e0d0"></div>
<div class="t " style="left:517px;top:538px;">translat</div>
<svg style="left:565px;top:536px" width="11" height="11" viewBox="0 0 11 11"><defs><linearGradient id="ck534" x1="0" y1="0" x2="1" y2="1"><stop offset="0" stop-color="#dcdcdc"/><stop offset="1" stop-color="#f6f6f6"/></linearGradient></defs><rect x="0.5" y="0.5" width="10" height="10" fill="url(#ck534)" stroke="#8a8a8a" stroke-width="0.8"/><path d="M2.6 5.2 L4.6 8 L8.4 2.4" stroke="#3a56a8" stroke-width="1.3" fill="none"/></svg>
<div class="ab" style="left:828px;top:238px;width:13px;height:306px;background:#ededed;border-left:1px solid #e0e0e0"></div>
<svg style="left:831px;top:244px" width="8" height="5" viewBox="0 0 8 5"><path d="M0.5 4 L3.5 0.5 L6.5 4 Z" fill="#444"/></svg>
<svg style="left:832px;top:535px" width="8" height="5" viewBox="0 0 8 5"><path d="M0.5 0.5 L3.5 3.5 L6.5 0.5 Z" fill="#333"/></svg>
<div class="ab" style="left:829px;top:254px;width:11px;height:70px;border:1px solid #9a9a9a;border-radius:2px;background:linear-gradient(90deg,#f4f4f4,#dcdcdc)"></div>
<svg style="left:831px;top:286px" width="8" height="6" viewBox="0 0 8 6"><path d="M1 0.5h5M1 2.5h5M1 4.5h5" stroke="#666" stroke-width="0.8"/></svg>
<div class="ab" style="left:218px;top:354px;width:264px;height:20px;background:linear-gradient(#6e6e6e,#5a5a5a 50%,#4a4a4a);border-top:1px solid #3c3c3c"></div>
<svg style="left:222px;top:357px" width="16" height="15" viewBox="0 0 16 15"><path d="M7.8 0.5v14M1 7.3h14.5" stroke="#1aa81a" stroke-width="3.8"/><path d="M7.8 1v13M1.5 7.3h13.5" stroke="#2ee02e" stroke-width="2.6"/></svg>
<div class="ab" style="left:246px;top:362px;width:15px;height:4px;background:#d0d0d0"></div>
<div class="ab" style="left:218px;top:374px;width:264px;height:17px;background:linear-gradient(#fff,#fafafa 45%,#eef0f3 55%,#f0f1f3);border-bottom:1px solid #d6d6d6"></div>
<div class="ab" style="left:218px;top:374px;width:80px;height:17px;background:linear-gradient(#eef7fd,#e8f3fb 45%,#d9ebf8 55%,#dbecf8);border:1px solid #a9d0ec;border-top:none"></div>
<svg style="left:254px;top:374px" width="8" height="4" viewBox="0 0 8 4"><path d="M0.5 0.5 L7 0.5 L3.75 3.5 Z" fill="#6aa5d6"/></svg>
<div class="ab" style="left:377px;top:375px;width:1px;height:15px;background:#e2e2e2"></div>
<div class="ab" style="left:458px;top:375px;width:1px;height:15px;background:#e2e2e2"></div>
<div class="t " style="left:221px;top:379px;">Sender</div>
<div class="t " style="left:300px;top:379px;">Signal</div>
<div class="t " style="left:381px;top:379px;">Receiver</div>
<div class="t " style="left:461px;top:379px;">Slot</div>
<div class="ab" style="left:218px;top:514px;width:264px;height:13px;background:#ececec;border-top:1px solid #e4e4e4"></div>
<svg style="left:222px;top:517px" width="5" height="8" viewBox="0 0 5 8"><path d="M4 0.5 L0.5 3.75 L4 7 Z" fill="#444"/></svg>
<svg style="left:474px;top:517px" width="5" height="8" viewBox="0 0 5 8"><path d="M0.5 0.5 L4 3.75 L0.5 7 Z" fill="#444"/></svg>
<div class="ab" style="left:232px;top:515px;width:194px;height:11px;border:1px solid #a0a0a0;border-radius:2px;background:linear-gradient(#f5f5f5,#e2e2e2 50%,#d2d2d2)"></div>
<svg style="left:326px;top:518px" width="6" height="5" viewBox="0 0 6 5"><path d="M0.5 0v5M2.5 0v5M4.5 0v5" stroke="#666" stroke-width="0.8"/></svg>
<div class="ab" style="left:218px;top:527px;width:264px;height:17px;background:#efefef;border-top:1px solid #a0a0a0"></div>
<div class="ab" style="left:219px;top:527px;width:66px;height:16px;background:linear-gradient(#e9e9e9,#d8d8d8);border:1px solid #a0a0a0;border-bottom:none"></div>
<div class="ab" style="left:285px;top:527px;width:101px;height:17px;background:#fff;border:1px solid #a0a0a0;border-top:none;border-bottom:none"></div>
<div class="t " style="left:226px;top:531px;font-size:9.5px">Action Editor</div>
<div class="t " style="left:296px;top:532px;font-size:9.5px">Signals &amp; Slots Editor</div>
<div class="ab" style="left:57px;top:544px;width:784px;height:20px;background:linear-gradient(90deg,#2a2a2a 0,#363636 200px,#424242 400px,#4c4c4c 540px,#4c4c4c 784px);border-top:1px solid #2a2a2a"></div>
<div class="ab" style="left:63px;top:549px;width:12px;height:11px;background:#e0e0e0"></div>
<div class="ab" style="left:67px;top:551px;width:5px;height:7px;background:#2a2a2a"></div>
<div class="ab" style="left:83px;top:547px;width:158px;height:15px;background:#fff;border-radius:3px;border:1px solid #bbb"></div>
<svg style="left:88px;top:549px" width="16" height="11" viewBox="0 0 16 11"><circle cx="6.5" cy="4" r="3" fill="none" stroke="#555" stroke-width="1.2"/><path d="M4.5 6 L1.5 9.5" stroke="#555" stroke-width="1.6"/><path d="M11 5 L15 5 L13 7.5 Z" fill="#555"/></svg>
<div class="t " style="left:105px;top:550px;color:#8a8a8a">Type to locate</div>
<div class="ab" style="left:252px;top:549px;width:13px;height:12px;background:linear-gradient(#6d6d6d,#555);border:1px solid #7a7a7a;border-radius:1px"></div>
<div class="t " style="left:252px;width:13px;text-align:center;top:550px;color:#d8d8d8;font-size:9.5px">1</div>
<div class="ab" style="left:265px;top:549px;width:51px;height:12px;background:linear-gradient(#dcdcdc,#c6c6c6);border:1px solid #888;border-radius:1px"></div>
<div class="t " style="left:267px;top:550px;font-size:9.5px;letter-spacing:-0.35px">Build Issues</div>
<div class="ab" style="left:321px;top:549px;width:13px;height:12px;background:linear-gradient(#6d6d6d,#555);border:1px solid #7a7a7a;border-radius:1px"></div>
<div class="t " style="left:321px;width:13px;text-align:center;top:550px;color:#d8d8d8;font-size:9.5px">2</div>
<div class="ab" style="left:334px;top:549px;width:62px;height:12px;background:linear-gradient(#dcdcdc,#c6c6c6);border:1px solid #888;border-radius:1px"></div>
<div class="t " style="left:336px;top:550px;font-size:9.5px;letter-spacing:-0.35px">Search Results</div>
<div class="ab" style="left:401px;top:549px;width:13px;height:12px;background:linear-gradient(#6d6d6d,#555);border:1px solid #7a7a7a;border-radius:1px"></div>
<div class="t " style="left:401px;width:13px;text-align:center;top:550px;color:#d8d8d8;font-size:9.5px">3</div>
<div class="ab" style="left:414px;top:549px;width:76px;height:12px;background:linear-gradient(#dcdcdc,#c6c6c6);border:1px solid #888;border-radius:1px"></div>
<div class="t " style="left:416px;top:550px;font-size:9.5px;letter-spacing:-0.35px">Application Output</div>
<div class="ab" style="left:497px;top:549px;width:13px;height:12px;background:linear-gradient(#6d6d6d,#555);border:1px solid #7a7a7a;border-radius:1px"></div>
<div class="t " style="left:497px;width:13px;text-align:center;top:550px;color:#d8d8d8;font-size:9.5px">4</div>
<div class="ab" style="left:510px;top:549px;width:65px;height:12px;background:linear-gradient(#dcdcdc,#c6c6c6);border:1px solid #888;border-radius:1px"></div>
<div class="t " style="left:512px;top:550px;font-size:9.5px;letter-spacing:-0.35px">Compile Output</div>
<svg style="left:829px;top:552px" width="12" height="12" viewBox="0 0 12 12"><path d="M3 12 L12 3 M7 12 L12 7" stroke="#5e5e5e" stroke-width="1"/></svg>
</body></html>
